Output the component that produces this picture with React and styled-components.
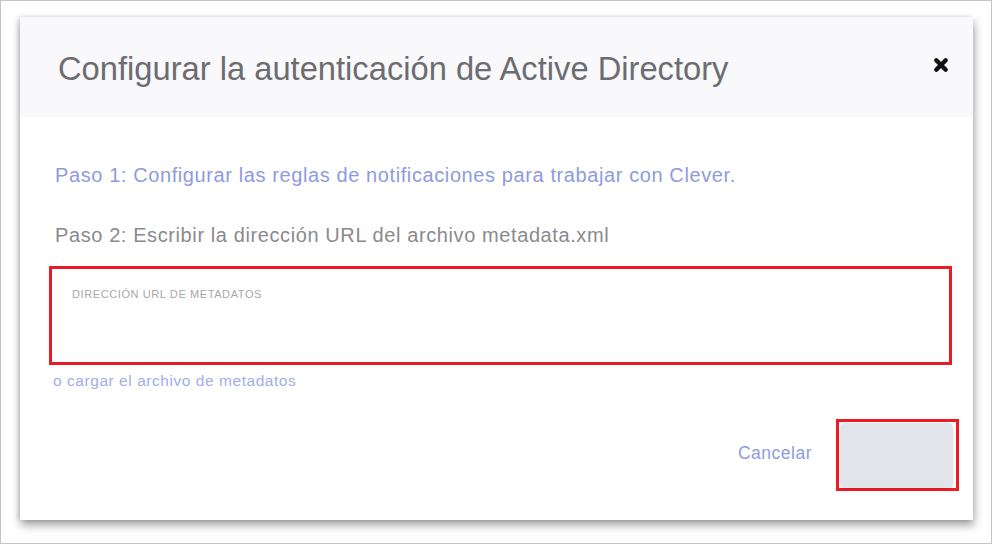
import React, { useState } from "react"
import styled, { createGlobalStyle } from "styled-components"

const GlobalStyle = createGlobalStyle`
    html, body {
        margin: 0;
        padding: 0;
        background: #ffffff;
    }
    * {
        box-sizing: border-box;
    }
`

function CloseIcon(){
    return(
        <svg width="16" height="16" viewBox="0 0 16 16">
            <path d="M3.3 3.3 L12.7 12.7 M12.7 3.3 L3.3 12.7" stroke="#111111" strokeWidth="4.4" strokeLinecap="round" />
        </svg>
    )
}

export default function App(){
    const [url, setUrl] = useState("")

    return(
        <>
            <GlobalStyle />
            <Frame>
                <Dialog>
                    <Header>
                        <Title>Configurar la autenticación de Active Directory</Title>
                        <CloseButton aria-label="Cerrar">
                            <CloseIcon />
                        </CloseButton>
                    </Header>
                    <Body>
                        <Step link>Paso 1: Configurar las reglas de notificaciones para trabajar con Clever.</Step>
                        <Step>Paso 2: Escribir la dirección URL del archivo metadata.xml</Step>
                        <Highlight>
                            <Field>
                                <FieldLabel>DIRECCIÓN URL DE METADATOS</FieldLabel>
                                <FieldInput value={url} onChange={e => setUrl(e.target.value)} />
                            </Field>
                        </Highlight>
                        <UploadLink>o cargar el archivo de metadatos</UploadLink>
                    </Body>
                    <Footer>
                        <CancelButton>Cancelar</CancelButton>
                        <ButtonHighlight>
                            <SaveButton disabled />
                        </ButtonHighlight>
                    </Footer>
                </Dialog>
            </Frame>
        </>
    )
}

const Frame = styled.div`
    width: 992px;
    height: 544px;
    border: 1px solid #c4c4c4;
    padding: 16px 0 0 19px;
    background: #ffffff;
    font-family: "Liberation Sans", Arial, sans-serif;
`
const Dialog = styled.div`
    width: 953px;
    height: 503px;
    background: #ffffff;
    display: flex;
    flex-direction: column;
    box-shadow: 1px 5px 9px rgba(0, 0, 0, 0.38), -2px 0 4px rgba(0, 0, 0, 0.12);
`
const Header = styled.div`
    height: 100px;
    background: #f9f9fb;
    display: flex;
    align-items: center;
    justify-content: space-between;
    padding: 4px 24px 0 38px;
`
const Title = styled.h1`
    margin: 0;
    font-size: 32.7px;
    font-weight: normal;
    color: #6c6c71;
`
const CloseButton = styled.button`
    border: none;
    background: none;
    padding: 0;
    display: flex;
    align-items: center;
    margin-top: -8px;
`
const Body = styled.div`
    display: flex;
    flex-direction: column;
    padding: 46px 21px 0 29px;
`
const Step = styled.p`
    margin: 0 0 35px 6px;
    font-size: 20px;
    line-height: 25px;
    letter-spacing: 0.6px;
    color: ${props => props.link ? "#8f9ae0" : "#8a8a8d"};
    &:last-of-type {
        margin-bottom: 18px;
    }
`
const Highlight = styled.div`
    border: 3px solid #ed1c24;
    height: 99px;
`
const Field = styled.div`
    height: 100%;
    background: #ffffff;
    box-shadow: 0 1px 4px rgba(40, 40, 80, 0.12);
    display: flex;
    flex-direction: column;
    padding: 19px 20px 0 20px;
`
const FieldLabel = styled.label`
    font-size: 11px;
    letter-spacing: 0.6px;
    color: #a7a7ab;
`
const FieldInput = styled.input`
    border: none;
    outline: none;
    background: transparent;
    font-size: 15px;
    margin-top: 8px;
`
const UploadLink = styled.a`
    margin: 6px 0 0 4px;
    font-size: 15.5px;
    line-height: 19px;
    letter-spacing: 0.55px;
    color: #a3ace9;
    cursor: pointer;
`
const Footer = styled.div`
    margin-top: auto;
    display: flex;
    justify-content: flex-end;
    align-items: center;
    gap: 24px;
    padding: 0 14px 29px 0;
`
const CancelButton = styled.button`
    border: none;
    background: none;
    padding: 0;
    font-family: "Liberation Sans", Arial, sans-serif;
    font-size: 17.5px;
    letter-spacing: 0.5px;
    color: #8f9be3;
    margin-top: -4px;
`
const ButtonHighlight = styled.div`
    border: 3px solid #ed1c24;
    width: 123px;
    height: 72px;
    padding: 1px 3px 0 1px;
`
const SaveButton = styled.button`
    width: 100%;
    height: 100%;
    border: none;
    border-radius: 5px;
    background: #e1e4e9;
    box-shadow: 0 1px 3px rgba(0, 0, 0, 0.1);
`
